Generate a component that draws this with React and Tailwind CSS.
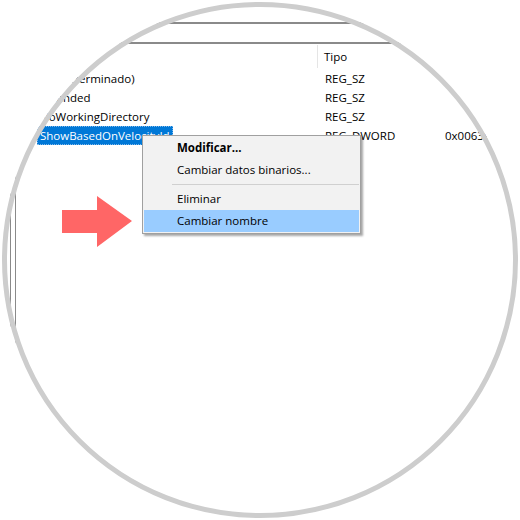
import React from 'react';

const rows = [
    { name: '(Predeterminado)', type: 'REG_SZ', data: '' },
    { name: 'Extended', type: 'REG_SZ', data: '' },
    { name: 'NoWorkingDirectory', type: 'REG_SZ', data: '' },
    { name: 'ShowBasedOnVelocityId', type: 'REG_DWORD', data: '0x00639bc0 (6528960)', selected: true },
];

const font = { fontFamily: '"Open Sans", "Noto Sans", sans-serif' };

const MenuItem = ({ children, bold, active }) => (
    <div className={`h-[22px] flex items-center pl-[33px] mx-[1px] ${active ? 'bg-[#99ccff]' : ''} ${bold ? 'font-bold' : ''}`}>
        {children}
    </div>
);

const App = () => {
    return (
        <div className="relative w-[520px] h-[520px] bg-white text-[11.5px] text-black" style={font}>
            {/* magnified view */}
            <div className="absolute left-[2px] top-[2px] w-[516px] h-[516px] rounded-full overflow-hidden">
                <div className="absolute -left-[2px] -top-[2px] w-[520px] h-[520px] flex flex-col">
                    <div className="h-[22px] shrink-0" />
                    <div className="h-[2px] bg-[#8a8a8a] shrink-0" />
                    <div className="h-[18px] shrink-0" />
                    <div className="h-[2px] bg-[#8a8a8a] shrink-0" />
                    <div className="flex flex-1 min-h-0">
                        <div className="w-[11px] shrink-0 border-r border-[#8a8a8a]" />
                        <div className="w-[5px] shrink-0 border-r border-[#8a8a8a]" />
                        <div className="flex-1 min-w-0 overflow-hidden flex flex-col">
                            {/* header */}
                            <div className="h-[25px] flex shrink-0">
                                <div className="w-[302px] shrink-0 my-[1px] border-r border-[#e5e5e5] flex items-center pl-[24px]">Nombre</div>
                                <div className="w-[120px] shrink-0 flex items-center pl-[6px]">Tipo</div>
                                <div className="flex-1 flex items-center pl-[6px]">Datos</div>
                            </div>
                            {rows.map((r) => (
                                <div key={r.name} className="h-[19px] flex items-center shrink-0">
                                    <div className="w-[303px] shrink-0 pl-[21px] flex items-center whitespace-nowrap">
                                        <span className={`h-[19px] flex items-center px-[3px] ${r.selected ? 'bg-[#0078d7] text-white outline outline-1 outline-dotted outline-[#7fb8ea] -outline-offset-1' : ''}`}>
                                            {r.name}
                                        </span>
                                    </div>
                                    <div className="w-[120px] shrink-0 pl-[6px] whitespace-nowrap">{r.type}</div>
                                    <div className="flex-1 pl-[6px] whitespace-nowrap">{r.data}</div>
                                </div>
                            ))}
                        </div>
                    </div>
                </div>

                {/* context menu */}
                <div className="absolute left-[140px] top-[133px] w-[219px] border border-[#a0a0a0] bg-[#f2f2f2] py-[1px] shadow-[2px_2px_2px_rgba(0,0,0,0.35)]">
                    <MenuItem bold>Modificar...</MenuItem>
                    <MenuItem>Cambiar datos binarios...</MenuItem>
                    <div className="h-[7px] flex items-center ml-[29px] mr-[1px]">
                        <div className="h-[1px] w-full bg-[#d0d0d0]" />
                    </div>
                    <MenuItem>Eliminar</MenuItem>
                    <MenuItem active>Cambiar nombre</MenuItem>
                </div>
            </div>

            {/* red pointer arrow */}
            <svg className="absolute left-0 top-0" width="520" height="520" viewBox="0 0 520 520">
                <polygon points="62,210 97,210 97,196 132,221 97,247 97,233 62,233" fill="#ff6666" />
            </svg>

            {/* lens ring */}
            <div className="absolute left-[2px] top-[2px] w-[516px] h-[516px] rounded-full border-[5px] border-[#cdcdcd] pointer-events-none" />
        </div>
    );
};

export default App;
